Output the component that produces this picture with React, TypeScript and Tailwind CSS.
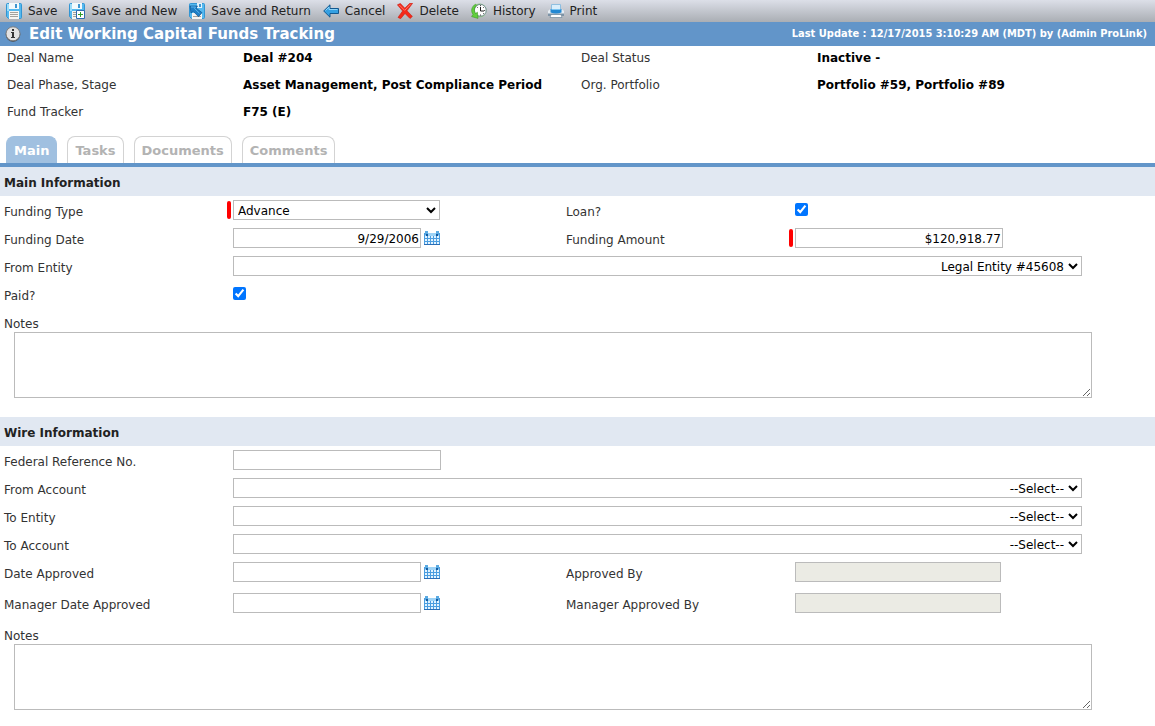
import { ReactNode, useState } from "react";

const tabs = ["Main", "Tasks", "Documents", "Comments"];

const boxClass = "h-5 border border-[#bbb] bg-white text-black outline-none";

function DiskBase() {
  return (
    <>
      <path d="M.5 1.5a1 1 0 0 1 1-1h13a1 1 0 0 1 1 1v13a1 1 0 0 1-1 1h-12l-2-2z" fill="#55b9ef" stroke="#3295d3" />
      <path d="M1 1h2v7H1z" fill="#9bdcfa" />
      <path d="M3 0h10v6H3z" fill="#f3f9fc" />
      <path d="M9 1h2v4H9z" fill="#3f95d0" />
      <path d="M3 8h10v8H3z" fill="#f6f5f2" />
      <path d="M4 9.5h8M4 11.5h8M4 13.5h8" stroke="#a3a19c" />
    </>
  );
}

function SaveIcon() {
  return (
    <svg width="16" height="16" viewBox="0 0 16 16" aria-hidden="true">
      <DiskBase />
    </svg>
  );
}

function SaveNewIcon() {
  return (
    <svg width="16" height="16" viewBox="0 0 16 16" aria-hidden="true">
      <DiskBase />
      <path d="M7.5 7.5h8v8h-8z" fill="#fff" stroke="#2f6cb0" />
      <path d="M11.5 9v5M9 11.5h5" stroke="#2f9e2b" />
    </svg>
  );
}

function SaveReturnIcon() {
  return (
    <svg width="16" height="16" viewBox="0 0 16 16" aria-hidden="true">
      <path d="M.5 1.5a1 1 0 0 1 1-1h13a1 1 0 0 1 1 1v13a1 1 0 0 1-1 1h-12l-2-2z" fill="#55b9ef" stroke="#3295d3" />
      <path d="M8 0h5v5H8z" fill="#e3f3fc" />
      <path d="M10 1h2v3h-2z" fill="#3f95d0" />
      <path d="M3 10h10v6H3z" fill="#f6f5f2" />
      <path d="M4 13.5h8" stroke="#a3a19c" />
      <path d="M1 3h7.5L7 5l6 4.7-3.5 4L4.2 8.3 2 10z" fill="#1f7fc6" stroke="#0f5590" strokeWidth=".7" />
      <path d="M2 4h4.5L5.5 5.5l5 4.8" fill="none" stroke="#58b4ec" />
    </svg>
  );
}

function CancelIcon() {
  return (
    <svg width="16" height="16" viewBox="0 0 16 16" aria-hidden="true">
      <path d="M.7 8 7 1.8v3.7h8.5v5H7v3.7z" fill="#35a0e2" stroke="#14588f" strokeLinejoin="round" />
      <path d="M2.5 7.5 6 4v2.5h8.5" fill="none" stroke="#8ed4fa" />
    </svg>
  );
}

function DeleteIcon() {
  return (
    <svg width="16" height="16" viewBox="0 0 16 16" aria-hidden="true">
      <path
        d="M.4 1.8 3.4.5 7.8 5.2 12.8.3h2.8L10 7.8l5.4 5.6-2.4 2.1L8 10.5 3.6 15.7l-2.6-1.3L5.6 8z"
        fill="#f5281a"
        stroke="#c81c12"
        strokeWidth=".6"
      />
      <path d="m2.3 2 5.4 5.4L13.4 1.3" fill="none" stroke="#ff7a68" />
    </svg>
  );
}

function HistoryIcon() {
  return (
    <svg width="16" height="16" viewBox="0 0 16 16" aria-hidden="true">
      <circle cx="8.5" cy="7.5" r="7" fill="#8fcf7c" />
      <circle cx="9.3" cy="7.3" r="5.9" fill="#fff" stroke="#6d8291" strokeWidth=".9" />
      <path d="M9.5 2v1.2M9.5 11.5v1.2M13 7.5h1.2M6 4l.8.8M13 4l-.8.8M13 11l-.8-.8" stroke="#555" />
      <path d="M9.5 4v4H13" fill="none" stroke="#222" />
      <path
        d="M4.5 1.2C.8 3.2-.6 8 2 11.4L.6 13.6l6.4 1.8-.6-6.2-1.8 1.4C2.8 8 3 4.2 5.4 2.4z"
        fill="#62cf3e"
        stroke="#3c9a27"
        strokeWidth=".6"
      />
    </svg>
  );
}

function PrintIcon() {
  return (
    <svg width="16" height="16" viewBox="0 0 16 16" aria-hidden="true">
      <path d="M3.5 1.5h9V8h-9z" fill="#d9eefb" stroke="#8fbfe0" />
      <path d="M0 8l1.5-1.5h13L16 8v5H0z" fill="#e6edf3" />
      <path d="M0 10.5h16V13H0z" fill="#7d93a6" />
      <path d="M2.5 6h11v3.5q-5.5 2-11 0z" fill="#2388d2" />
      <path d="M3.5 6.5h9" stroke="#7cc5f2" />
      <path d="M3 11.5h10l1 3H2z" fill="#fff" stroke="#6f8799" strokeWidth=".7" />
    </svg>
  );
}

function InfoIcon() {
  return (
    <svg width="16" height="16" viewBox="0 0 16 16" aria-hidden="true">
      <circle cx="8" cy="8.6" r="7.3" fill="#4c5560" />
      <circle cx="8" cy="7.8" r="7" fill="#e2e2e2" stroke="#777" strokeWidth=".9" />
      <path d="M7 3h2v2H7zM6 6h3v5h1v1H6v-1h1V7H6z" fill="#333" />
    </svg>
  );
}

function CalendarButton({ label }: { label: string }) {
  return (
    <button type="button" aria-label={label} className="ml-[3px] h-5 w-4">
      <svg width="16" height="16" viewBox="0 0 16 16" aria-hidden="true">
        <path d="M0 3h16v12H0z" fill="#4a9de0" />
        <path d="M1 3h14v3H1z" fill="#9dd3f6" />
        <path d="M1 1h3v4H1zM12 1h3v4h-3z" fill="#5aaae2" />
        <path d="M2 4h2v2H2zM12 4h2v2h-2z" fill="#12589f" />
        <path
          d="M1 6h2v2H1zM4 6h2v2H4zM7 6h2v2H7zM10 6h2v2h-2zM13 6h2v2h-2zM1 9h2v2H1zM4 9h2v2H4zM7 9h2v2H7zM10 9h2v2h-2zM13 9h2v2h-2zM1 12h2v2H1zM4 12h2v2H4zM7 12h2v2H7zM10 12h2v2h-2zM13 12h2v2h-2z"
          fill="#e2f3ff"
        />
        <path d="M0 14h16v1H0z" fill="#2a6db5" />
      </svg>
    </button>
  );
}

const actions = [
  { name: "Save", icon: <SaveIcon /> },
  { name: "Save and New", icon: <SaveNewIcon /> },
  { name: "Save and Return", icon: <SaveReturnIcon /> },
  { name: "Cancel", icon: <CancelIcon /> },
  { name: "Delete", icon: <DeleteIcon /> },
  { name: "History", icon: <HistoryIcon /> },
  { name: "Print", icon: <PrintIcon /> },
];

function Row({ children, tall }: { children: ReactNode; tall?: boolean }) {
  return (
    <div
      className={`grid grid-cols-[223px_339fr_223px_366fr] items-start pt-1 pl-1 ${tall ? "h-[31px]" : "h-7"}`}
    >
      {children}
    </div>
  );
}

function Label({ id, children }: { id: string; children: ReactNode }) {
  return (
    <label htmlFor={id} className="leading-6">
      {children}
    </label>
  );
}

// The thin slot before each control holds the red "required" marker.
function Field({
  children,
  required,
  wide,
}: {
  children: ReactNode;
  required?: boolean;
  wide?: boolean;
}) {
  return (
    <div className={`flex h-5 items-center ${wide ? "col-span-3 pr-[73px]" : ""}`}>
      <span className={`mr-0.5 h-[18px] w-1 shrink-0 rounded-sm ${required ? "bg-[#f00]" : ""}`} />
      {children}
    </div>
  );
}

function CheckField({ id, label }: { id: string; label: string }) {
  return (
    <>
      <Label id={id}>{label}</Label>
      <Field>
        <input id={id} type="checkbox" defaultChecked className="mb-0.5 h-[13px] w-[13px]" />
      </Field>
    </>
  );
}

function DateField({ id, label, value }: { id: string; label: string; value?: string }) {
  return (
    <>
      <Label id={id}>{label}</Label>
      <Field>
        <input
          id={id}
          type="text"
          defaultValue={value}
          className={`${boxClass} w-[188px] px-px pt-px text-right`}
        />
        <CalendarButton label={`Pick ${label}`} />
      </Field>
    </>
  );
}

function ReadOnlyField({ id, label }: { id: string; label: string }) {
  return (
    <>
      <Label id={id}>{label}</Label>
      <Field>
        <input
          id={id}
          type="text"
          disabled
          className="h-5 w-[206px] border border-[#bbb] bg-[#ebebe4]"
        />
      </Field>
    </>
  );
}

function WideSelect({ id, label, option }: { id: string; label: string; option: string }) {
  return (
    <Row>
      <Label id={id}>{label}</Label>
      <Field wide>
        <select id={id} className={`${boxClass} w-full pt-px pr-px text-right`}>
          <option>{option}</option>
        </select>
      </Field>
    </Row>
  );
}

function Notes({ id }: { id: string }) {
  return (
    <div className="pt-1 pr-[63px] pl-1">
      <label htmlFor={id} className="block h-5 leading-6">
        Notes
      </label>
      <div className="pl-2.5">
        <textarea
          id={id}
          className="block h-[66px] w-full resize border border-[#bbb] bg-white p-0.5 text-black outline-none"
        />
      </div>
    </div>
  );
}

function SectionTitle({ children }: { children: ReactNode }) {
  return <h2 className="bg-[#e1e8f2] pt-1 pl-1 leading-[25px] font-bold text-[#222]">{children}</h2>;
}

function DealInfo() {
  return (
    <dl className="grid grid-cols-[236px_1fr_236px_1fr] gap-y-1 pt-px pl-[7px] leading-[23px] [&_dd]:font-bold [&_dd]:text-black">
      <dt>Deal Name</dt>
      <dd>Deal #204</dd>
      <dt>Deal Status</dt>
      <dd>Inactive -</dd>
      <dt>Deal Phase, Stage</dt>
      <dd>Asset Management, Post Compliance Period</dd>
      <dt>Org. Portfolio</dt>
      <dd>Portfolio #59, Portfolio #89</dd>
      <dt>Fund Tracker</dt>
      <dd>F75 (E)</dd>
    </dl>
  );
}

export default function App() {
  const [activeTab, setActiveTab] = useState("Main");

  return (
    <div className="min-h-screen bg-white pb-4 font-['DejaVu_Sans',Verdana,sans-serif] text-[12px] text-[#333]">
      <div className="flex h-[22px] items-center gap-3 bg-linear-to-b from-[#dcdfe8] to-[#aaaeb4] pl-1.5">
        {actions.map((action) => (
          <button
            key={action.name}
            type="button"
            className="flex items-center gap-1.5 leading-5 text-[#222]"
          >
            {action.icon}
            {action.name}
          </button>
        ))}
      </div>

      <header className="flex h-6 items-center bg-[#6295c9] pr-2 pl-[5px] font-bold text-white">
        <InfoIcon />
        <h1 className="ml-2 text-[15px]">Edit Working Capital Funds Tracking</h1>
        <span className="ml-auto font-['DejaVu_Sans_Condensed','DejaVu_Sans',sans-serif] text-[11px]">
          Last Update : 12/17/2015 3:10:29 AM (MDT) by (Admin ProLink)
        </span>
      </header>

      <DealInfo />

      <div role="tablist" className="mt-3 flex gap-2.5 border-b-4 border-[#6295c9] pl-1.5">
        {tabs.map((tab) => (
          <button
            key={tab}
            type="button"
            role="tab"
            aria-selected={tab === activeTab}
            onClick={() => setActiveTab(tab)}
            className={`h-[27px] rounded-t-lg border border-b-0 px-[7px] pt-px text-[13px] font-bold ${
              tab === activeTab
                ? "border-[#a0c0e0] bg-[#a0c0e0] text-white"
                : "border-[#d3d3d3] bg-white text-[#b3b3b3]"
            }`}
          >
            {tab}
          </button>
        ))}
      </div>

      <form>
        <SectionTitle>Main Information</SectionTitle>
        <Row>
          <Label id="fundingType">Funding Type</Label>
          <Field required>
            <select id="fundingType" className={`${boxClass} w-[207px] pt-px`}>
              <option>Advance</option>
            </select>
          </Field>
          <CheckField id="loan" label="Loan?" />
        </Row>
        <Row>
          <DateField id="fundingDate" label="Funding Date" value="9/29/2006" />
          <Label id="fundingAmount">Funding Amount</Label>
          <Field required>
            <input
              id="fundingAmount"
              type="text"
              defaultValue="$120,918.77"
              className={`${boxClass} w-[208px] px-px pt-px text-right`}
            />
          </Field>
        </Row>
        <WideSelect id="fromEntity" label="From Entity" option="Legal Entity #45608" />
        <Row>
          <CheckField id="paid" label="Paid?" />
        </Row>
        <Notes id="mainNotes" />

        <div className="mt-[19px]">
          <SectionTitle>Wire Information</SectionTitle>
        </div>
        <Row>
          <Label id="federalRef">Federal Reference No.</Label>
          <Field>
            <input id="federalRef" type="text" className={`${boxClass} w-[208px] px-px`} />
          </Field>
        </Row>
        <WideSelect id="fromAccount" label="From Account" option="--Select--" />
        <WideSelect id="toEntity" label="To Entity" option="--Select--" />
        <WideSelect id="toAccount" label="To Account" option="--Select--" />
        <Row tall>
          <DateField id="dateApproved" label="Date Approved" />
          <ReadOnlyField id="approvedBy" label="Approved By" />
        </Row>
        <Row tall>
          <DateField id="managerDateApproved" label="Manager Date Approved" />
          <ReadOnlyField id="managerApprovedBy" label="Manager Approved By" />
        </Row>
        <Notes id="wireNotes" />
      </form>
    </div>
  );
}
